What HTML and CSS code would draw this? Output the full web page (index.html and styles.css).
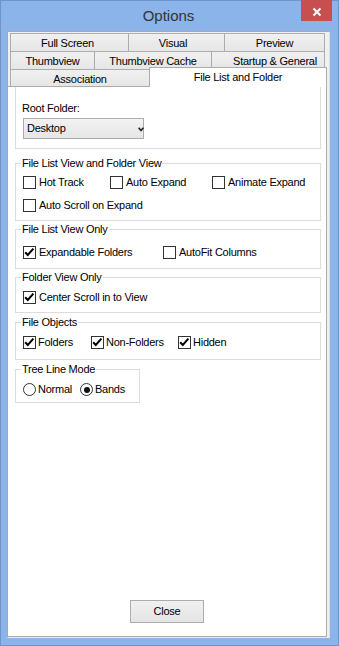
FILE: index.html
```html
<!DOCTYPE html>
<html>
<head>
<meta charset="utf-8">
<title>Options</title>
<link rel="stylesheet" href="styles.css">
</head>
<body>
<div class="window">
  <div class="titlebar">
    <span></span>
    <div class="title">Options</div>
    <div class="close-btn">
      <svg width="10" height="10" viewBox="0 0 10 10"><path d="M1.5 1.5 L8.5 8.5 M8.5 1.5 L1.5 8.5" stroke="#fff" stroke-width="2" fill="none"/></svg>
    </div>
  </div>
  <div class="client">
    <div class="tabs">
      <div class="tabrow">
        <div class="tab t-fs">Full Screen</div>
        <div class="tab t-vis">Visual</div>
        <div class="tab t-prev last">Preview</div>
      </div>
      <div class="tabrow">
        <div class="tab t-thumb">Thumbview</div>
        <div class="tab t-cache">Thumbview Cache</div>
        <div class="tab t-start last">Startup &amp; General</div>
      </div>
      <div class="tabrow row3">
        <div class="tab t-assoc">Association</div>
        <div class="tab selected last">File List and Folder</div>
      </div>
    </div>
    <div class="panel">
      <div class="rootbox">
        <div class="label">Root Folder:</div>
        <div class="select">
          <span>Desktop</span>
          <svg class="arrow" width="6" height="5" viewBox="0 0 6 5"><polyline points="0.6,0.8 3,3.6 5.4,0.8" stroke="#222" stroke-width="1.6" fill="none"/></svg>
        </div>
      </div>

      <div class="group g1">
        <span class="legend">File List View and Folder View</span>
        <div class="rows r1">
          <div class="row">
            <div class="item w87"><span class="box"></span><span>Hot Track</span></div>
            <div class="item w102"><span class="box"></span><span>Auto Expand</span></div>
            <div class="item"><span class="box"></span><span>Animate Expand</span></div>
          </div>
          <div class="row">
            <div class="item"><span class="box"></span><span>Auto Scroll on Expand</span></div>
          </div>
        </div>
      </div>

      <div class="group g2">
        <span class="legend">File List View Only</span>
        <div class="rows r2">
          <div class="row">
            <div class="item w140"><span class="box checked"><svg width="11" height="11" viewBox="0 0 11 11"><polyline points="1.2,5.2 3.8,8 9.4,1.6" stroke="#000" stroke-width="2" fill="none"/></svg></span><span>Expandable Folders</span></div>
            <div class="item"><span class="box"></span><span>AutoFit Columns</span></div>
          </div>
        </div>
      </div>

      <div class="group g3">
        <span class="legend">Folder View Only</span>
        <div class="rows r3">
          <div class="row">
            <div class="item"><span class="box checked"><svg width="11" height="11" viewBox="0 0 11 11"><polyline points="1.2,5.2 3.8,8 9.4,1.6" stroke="#000" stroke-width="2" fill="none"/></svg></span><span>Center Scroll in to View</span></div>
          </div>
        </div>
      </div>

      <div class="group g4">
        <span class="legend">File Objects</span>
        <div class="rows r4">
          <div class="row">
            <div class="item tight w68"><span class="box checked"><svg width="11" height="11" viewBox="0 0 11 11"><polyline points="1.2,5.2 3.8,8 9.4,1.6" stroke="#000" stroke-width="2" fill="none"/></svg></span><span>Folders</span></div>
            <div class="item tight w87"><span class="box checked"><svg width="11" height="11" viewBox="0 0 11 11"><polyline points="1.2,5.2 3.8,8 9.4,1.6" stroke="#000" stroke-width="2" fill="none"/></svg></span><span>Non-Folders</span></div>
            <div class="item tight"><span class="box checked"><svg width="11" height="11" viewBox="0 0 11 11"><polyline points="1.2,5.2 3.8,8 9.4,1.6" stroke="#000" stroke-width="2" fill="none"/></svg></span><span>Hidden</span></div>
          </div>
        </div>
      </div>

      <div class="group g5">
        <span class="legend">Tree Line Mode</span>
        <div class="rows r5">
          <div class="row">
            <div class="item tight w57"><span class="radio"></span><span>Normal</span></div>
            <div class="item tight"><span class="radio on"><span class="dot"></span></span><span>Bands</span></div>
          </div>
        </div>
      </div>

      <div class="button">Close</div>
    </div>
  </div>
</div>
</body>
</html>
```

FILE: styles.css
```css
* { box-sizing: border-box; }

html, body {
  margin: 0;
  padding: 0;
  background: #8bb4eb;
}

body {
  font-family: "Liberation Sans", Arial, sans-serif;
  font-size: 11px;
  letter-spacing: -0.25px;
  color: #000;
}

.window {
  width: 339px;
  height: 646px;
  border: 1px solid #6f94ca;
  background: #8bb4eb;
  padding: 0 8px 7px 6px;
  display: flex;
  flex-direction: column;
}

.titlebar {
  height: 30px;
  display: grid;
  grid-template-columns: 1fr auto 1fr;
  align-items: start;
}

.title {
  font-size: 15px;
  letter-spacing: 0;
  line-height: 30px;
  color: #333;
}

.close-btn {
  justify-self: end;
  width: 31px;
  height: 21px;
  margin-top: -1px;
  margin-right: -2px;
  background: #c7504f;
  display: flex;
  justify-content: center;
  align-items: center;
  padding-top: 2px;
}

.close-btn svg { display: block; }

.client {
  flex: 1;
  display: flex;
  flex-direction: column;
  background: #f0f0f0;
  border-top: 1px solid #a3a9b3;
  border-left: 1px solid #a3a9b3;
  border-right: 1px solid #d7dde6;
  border-bottom: 1px solid #e9e9e9;
}

.tabs {
  margin-top: 1px;
  margin-left: 2px;
}

.tabrow {
  display: flex;
  height: 18px;
}

.tabrow.row3 { height: 17px; }

.tab {
  height: 100%;
  border-top: 1px solid #acacac;
  border-left: 1px solid #acacac;
  background: linear-gradient(#f0f0f0, #e6e6e6);
  text-align: center;
  line-height: 13px;
  padding-top: 3px;
  white-space: nowrap;
}

.tab.last { border-right: 1px solid #acacac; }

.t-fs { width: 118px; padding-right: 4px; }
.t-vis { width: 96px; padding-right: 7px; }
.t-prev { width: 101px; }
.t-thumb { width: 84px; }
.t-cache { width: 117px; }
.t-start { width: 114px; padding-left: 14px; }
.t-assoc { width: 139px; }

.tab.selected {
  width: 178px;
  height: 20px;
  margin-top: -2px;
  background: #fff;
  position: relative;
  z-index: 1;
  padding-top: 3px;
}

.panel {
  flex: 1;
  margin-right: 2px;
  background: #fff;
  border-top: 1px solid #acacac;
  border-right: 1px solid #acacac;
  border-bottom: 1px solid #acacac;
  display: flex;
  flex-direction: column;
}

.rootbox {
  margin: 0 5px 0 7px;
  border: 1px solid #dcdcdc;
  border-top: none;
  padding: 15px 6px 9px 6px;
}

.label { line-height: 13px; }

.select {
  margin: 3px 0 0 1px;
  width: 121px;
  height: 21px;
  border: 1px solid #acacac;
  background: linear-gradient(#f3f3f3, #e5e5e5);
  display: flex;
  align-items: center;
  justify-content: space-between;
  padding-left: 3px;
  line-height: 13px;
}

.select .arrow {
  display: block;
  margin-right: -1px;
  margin-top: 1px;
}

.group {
  margin: 0 5px 0 7px;
  border: 1px solid #dcdcdc;
  padding: 0 6px 0 7px;
}

.legend {
  display: block;
  width: max-content;
  margin: -7px 0 0 -2px;
  padding: 0 1px;
  background: #fff;
  line-height: 13px;
}

.g1 { margin-top: 14px; padding-bottom: 8px; }
.g2 { margin-top: 8px; padding-bottom: 9px; }
.g3 { margin-top: 8px; padding-bottom: 8px; }
.g4 { margin-top: 9px; padding-bottom: 10px; }
.g5 { margin-top: 9px; padding-bottom: 6px; width: 125px; }

.rows {
  display: flex;
  flex-direction: column;
  gap: 10px;
}

.r1 { margin-top: 6px; }
.r2 { margin-top: 10px; }
.r3, .r4, .r5 { margin-top: 7px; }

.row {
  display: flex;
  height: 13px;
  align-items: center;
}

.item {
  display: flex;
  align-items: center;
  gap: 3px;
  line-height: 13px;
  white-space: nowrap;
}

.item.tight { gap: 2px; }

.w57 { width: 57px; }
.w68 { width: 68px; }
.w87 { width: 87px; }
.w102 { width: 102px; }
.w140 { width: 140px; }

.box {
  width: 13px;
  height: 13px;
  flex: none;
  border: 1px solid #333;
  background: #fff;
}

.box svg { display: block; }

.radio {
  width: 13px;
  height: 13px;
  flex: none;
  border: 1px solid #333;
  border-radius: 50%;
  background: #fff;
  display: flex;
  align-items: center;
  justify-content: center;
}

.radio .dot {
  width: 6px;
  height: 6px;
  border-radius: 50%;
  background: #111;
}

.button {
  margin-top: auto;
  margin-bottom: 13px;
  align-self: center;
  width: 74px;
  height: 23px;
  border: 1px solid #adadad;
  background: linear-gradient(#f0f0f0, #e5e5e5);
  display: flex;
  align-items: center;
  justify-content: center;
  line-height: 13px;
}
```
